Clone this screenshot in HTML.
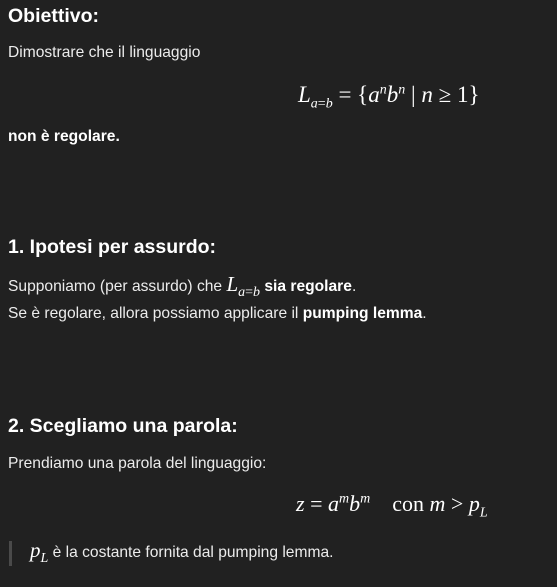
<!DOCTYPE html>
<html><head><meta charset="utf-8"><style>
body{margin:0;background:#212121;width:557px;height:587px;overflow:hidden;position:relative;color:#ececec;font-family:"Liberation Sans",sans-serif;font-size:15.6px}
.a{position:absolute;white-space:nowrap;line-height:20px}
h{font-weight:bold;font-size:19.5px;color:#fff}
b{color:#fff}
.m{font-family:"Liberation Serif",serif;font-size:23px;color:#fff;line-height:0}
i{font-family:"Liberation Serif",serif;font-style:italic}
sub,sup{font-size:14px;line-height:0}
</style></head><body>
<div class="a" style="left:8px;top:6px"><h>Obiettivo:</h></div>
<div class="a" style="left:8px;top:43px">Dimostrare che il linguaggio</div>
<div class="a m" style="left:298px;top:85px;line-height:20px"><i>L</i><sub><i>a</i>=<i>b</i></sub> = {<i>a</i><sup><i>n</i></sup><i>b</i><sup><i>n</i></sup> | <i>n</i> ≥ 1}</div>
<div class="a" style="left:8px;top:127px"><b>non è regolare.</b></div>
<div class="a" style="left:8px;top:237px"><h>1. Ipotesi per assurdo:</h></div>
<div class="a" style="left:8px;top:277px">Supponiamo (per assurdo) che <span class="m" style="font-size:21px"><i>L</i><sub><i>a</i>=<i>b</i></sub></span> <b>sia regolare</b>.</div>
<div class="a" style="left:8px;top:304px">Se è regolare, allora possiamo applicare il <b>pumping lemma</b>.</div>
<div class="a" style="left:8px;top:416px"><h>2. Scegliamo una parola:</h></div>
<div class="a" style="left:8px;top:454px">Prendiamo una parola del linguaggio:</div>
<div class="a m" style="left:296px;top:494px;font-size:22px;line-height:20px"><i>z</i> = <i>a</i><sup><i>m</i></sup><i>b</i><sup><i>m</i></sup> &nbsp;&nbsp; con <i>m</i> &gt; <i>p</i><sub><i>L</i></sub></div>
<div class="a" style="left:9px;top:541px;width:3px;height:25px;background:#4a4a4a"></div>
<div class="a" style="left:30px;top:543px"><span class="m" style="font-size:21px"><i>p</i><sub><i>L</i></sub></span> è la costante fornita dal pumping lemma.</div>
</body></html>
